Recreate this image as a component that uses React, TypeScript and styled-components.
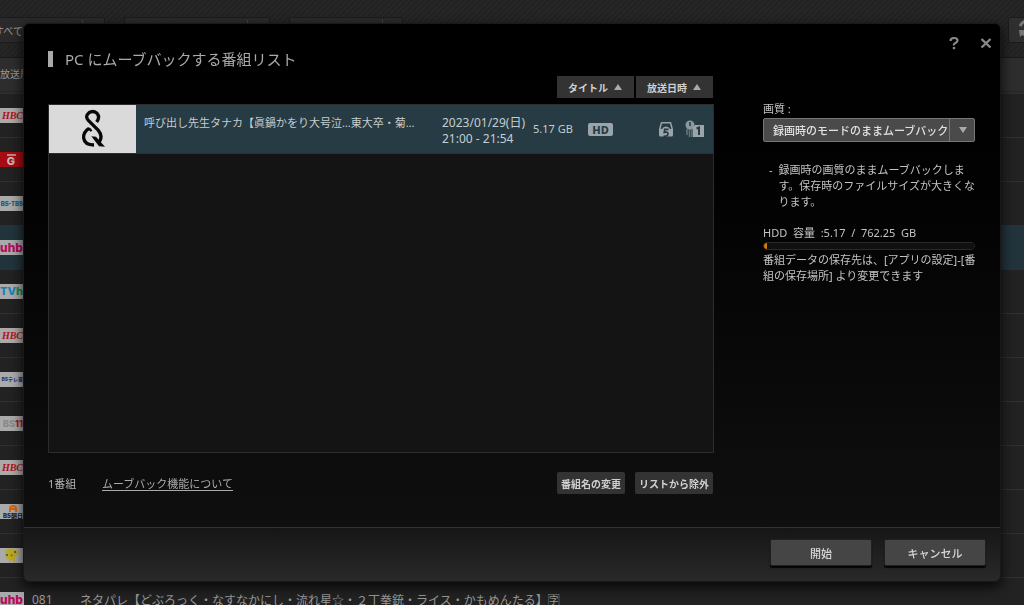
import React from "react";
import styled, { createGlobalStyle } from "styled-components";

const GlobalStyle = createGlobalStyle`
  *, *::before, *::after { box-sizing: border-box; }
  html, body { margin: 0; height: 100%; overflow: hidden; background: #222; }
  body, button, select { font-family: "Noto Sans", "Noto Sans CJK JP", sans-serif; }
  #root { height: 100%; }
  h1, p, ul { margin: 0; padding: 0; font-weight: 400; }
  ul { list-style: none; }
  button { margin: 0; padding: 0; border: 0; background: none; color: inherit; cursor: pointer; }
`;

/* ---------- recorder page behind the dialog ---------- */

const Page = styled.div`
  margin-left: -16px;
  height: 100%;
  overflow: hidden;
  color: #999;
  font-size: 12px;
`;

const Toolbar = styled.div`
  display: flex;
  gap: 19px;
  height: 57px;
  padding-top: 17px;
  background: repeating-linear-gradient(135deg, #262626 0 2px, #222 2px 4px);
`;

const Filter = styled.button<{ $width: number; $split: number }>`
  width: ${(p) => p.$width}px;
  height: 26px;
  padding-left: 9px;
  border: 1px solid #1b1b1b;
  border-radius: 2px;
  background: linear-gradient(#444, #444) ${(p) => p.$split}px 2px / 1px 20px no-repeat, #2a2a2a;
  font-size: 10px;
  text-align: left;
`;

const Refresh = styled.button`
  width: 40px;
  height: 26px;
  margin: 0 -24px 0 auto;
  padding-left: 8px;
  border: 1px solid #1b1b1b;
  border-radius: 2px;
  background: #2f2f2f;
  text-align: left;
`;

const ColumnHead = styled.div`
  height: 36px;
  padding: 0 16px;
  border-top: 1px solid #1a1a1a;
  border-bottom: 3px solid #292929;
  background: #2d2d2d;
  font-size: 10px;
  line-height: 32px;
`;

const Channel = styled.li<{ $active?: boolean }>`
  display: flex;
  align-items: center;
  height: 44px;
  border-top: 1px solid #303030;
  background: ${(p) => (p.$active ? "#22343b" : "#222")};
`;

const Station = styled.span<{ $bg: string; $fg: string; $size: number; $slant?: boolean }>`
  display: flex;
  flex: none;
  align-items: center;
  justify-content: flex-end;
  width: 40px;
  height: 15px;
  padding-right: 1px;
  overflow: hidden;
  background: ${(p) => p.$bg};
  color: ${(p) => p.$fg};
  font-family: ${(p) => (p.$slant ? '"Liberation Serif", serif' : '"Inter", "Noto Sans CJK JP", sans-serif')};
  font-style: ${(p) => (p.$slant ? "italic" : "normal")};
  font-size: ${(p) => p.$size}px;
  font-weight: 800;
  line-height: 15px;
  white-space: nowrap;
`;

const ChannelNumber = styled.span`
  width: 56px;
  padding-left: 8px;
`;

const Program = styled.span`
  white-space: nowrap;
`;

const Tint = styled.span<{ $color: string }>`
  color: ${(p) => p.$color};
`;

const GMark = styled.span`
  display: flex;
  flex-direction: column;
  align-items: center;
  width: 24px;
  font-size: 11px;
  line-height: 9px;

  &::before {
    width: 9px;
    height: 2px;
    margin-bottom: 1px;
    background: #b88;
    content: "";
  }
`;

const AsahiMark = styled.span`
  display: flex;
  flex-direction: column;
  align-items: center;
  font-size: 6px;
  line-height: 7px;
`;

/* ---------- dialog ---------- */

const Overlay = styled.div`
  position: fixed;
  inset: 0;
  display: flex;
  padding: 24px;
`;

const Dialog = styled.section`
  display: flex;
  flex: 1;
  flex-direction: column;
  min-width: 0;
  border-radius: 5px;
  background: linear-gradient(#000 0%, #020202 30%, #0f0f0f 90%);
  box-shadow: 0 0 0 1px #191919, 0 5px 12px 2px rgba(0, 0, 0, 0.7);
  color: #c4c4c4;
  overflow: hidden;
`;

const Header = styled.header`
  display: flex;
  align-items: flex-start;
  gap: 16px;
  height: 52px;
  padding: 11px 6px 0 24px;
`;

const Title = styled.h1`
  display: flex;
  flex: 1;
  align-items: center;
  gap: 12px;
  margin-top: 12px;
  color: #aaa;
  font-size: 15px;
  line-height: 24px;

  &::before {
    width: 5px;
    height: 16px;
    background: #aaa;
    content: "";
  }
`;

const IconButton = styled.button`
  display: grid;
  place-items: center;
  width: 16px;
  height: 16px;
  color: #888;
`;

const Body = styled.div`
  display: grid;
  flex: 1;
  grid-template-columns: minmax(0, 1fr) 212px;
  gap: 49px;
  min-height: 0;
  padding: 0 25px 0 24px;
`;

const Main = styled.div`
  display: flex;
  flex-direction: column;
  min-height: 0;
`;

const SortBar = styled.div`
  display: flex;
  justify-content: flex-end;
  gap: 2px;
  margin: 0 1px 6px 0;
`;

const SortButton = styled.button`
  display: flex;
  align-items: center;
  justify-content: center;
  gap: 5px;
  width: 77px;
  height: 22px;
  background: #333;
  color: #d0d0d0;
  font-size: 10px;
  font-weight: 600;
`;

const List = styled.ul`
  flex: 1;
  min-height: 0;
  border: 1px solid #2c2c2c;
  background: #141414;
  overflow: hidden;
`;

const Item = styled.li`
  display: flex;
  height: 49px;
  border-bottom: 1px solid #2a2f31;
  background: #263b43;
  color: #c6cdd0;
  font-size: 12px;
  line-height: 16px;
`;

const Thumb = styled.div`
  display: grid;
  flex: none;
  place-items: center;
  width: 87px;
  background: #dadada;
`;

const ItemTitle = styled.p`
  flex: 1;
  min-width: 0;
  padding: 10px 0 0 8px;
  font-size: 11px;
  white-space: nowrap;
`;

const ItemDate = styled.p`
  width: 91px;
  padding-top: 10px;
  white-space: nowrap;
`;

const ItemSize = styled.p`
  align-self: center;
  width: 55px;
  font-size: 11px;
  white-space: nowrap;
`;

const ItemMarks = styled.div`
  display: flex;
  align-items: center;
  gap: 11px;
  width: 125px;
  padding-right: 8px;
`;

const Badge = styled.span`
  width: 25px;
  height: 13px;
  margin-right: auto;
  border-radius: 2px;
  background: #9aa4a9;
  color: #263b43;
  font-size: 11px;
  font-weight: 800;
  line-height: 13px;
  text-align: center;
`;

const Actions = styled.div`
  display: flex;
  align-items: center;
  height: 22px;
  margin: 19px 1px 33px 0;
  font-size: 11px;
`;

const Count = styled.span`
  width: 54px;
  color: #b4b4b4;
`;

const HelpLink = styled.a`
  margin-right: auto;
  color: #aaa;
  text-underline-offset: 2px;
`;

const SmallButton = styled.button<{ $width: number }>`
  width: ${(p) => p.$width}px;
  height: 22px;
  margin-left: 10px;
  border-radius: 2px;
  background: #333;
  color: #d0d0d0;
  font-size: 10px;
  font-weight: 600;
`;

const Side = styled.aside`
  padding-top: 25px;
  font-size: 11px;
  line-height: 16px;
  white-space: pre;
`;

const SideLabel = styled.label`
  display: block;
`;

const SelectBox = styled.div`
  position: relative;
  margin: 1px 0 20px;

  svg {
    position: absolute;
    top: 8px;
    right: 7px;
    pointer-events: none;
  }
`;

const Select = styled.select`
  display: block;
  width: 100%;
  height: 24px;
  padding: 0 0 0 9px;
  border: 1px solid #777;
  border-radius: 2px;
  appearance: none;
  background: linear-gradient(#777, #777) right 24px top 0 / 1px 22px no-repeat, #4a4a4a;
  color: #e0e0e0;
  font-size: 11px;
  font-weight: 500;
`;

const Note = styled.div`
  display: flex;
  margin-bottom: 15px;

  &::before {
    width: 16px;
    padding-left: 6px;
    content: "-";
  }
`;

const Capacity = styled.progress`
  display: block;
  width: 100%;
  height: 8px;
  margin: 1px 0 2px;
  border: 1px solid #2a2a2a;
  border-radius: 4px;
  appearance: none;
  background: #101010;
  overflow: hidden;

  &::-webkit-progress-bar { background: #101010; }
  &::-webkit-progress-value { min-width: 3px; background: #d87a10; }
`;

const Footer = styled.footer`
  display: flex;
  flex: none;
  justify-content: flex-end;
  gap: 12px;
  height: 54px;
  padding: 11px 14px 0;
  border-top: 1px solid #333;
  background: linear-gradient(#161616, #292929);
`;

const FooterButton = styled.button`
  width: 102px;
  height: 27px;
  border: 1px solid #202020;
  border-radius: 2px;
  background: #454545;
  box-shadow: 0 2px 1px #050505;
  color: #d8d8d8;
  font-size: 11px;
  font-weight: 500;
`;

type StationInfo = {
  name: string;
  bg: string;
  fg: string;
  size: number;
  slant?: boolean;
  art?: "g" | "asahi" | "chick" | "tvh" | "bs11";
};

const hbc: StationInfo = { name: "HBC", bg: "#aaa", fg: "#b01018", size: 10, slant: true };
const uhb: StationInfo = { name: "uhb", bg: "#aaa", fg: "#b8085c", size: 12 };

const stations: StationInfo[] = [
  hbc,
  { name: "G", bg: "#a80c12", fg: "#bbb", size: 9, art: "g" },
  { name: "BS-TBS", bg: "#aaa", fg: "#1c527e", size: 6 },
  uhb,
  { name: "TVh", bg: "#aaa", fg: "#1582b4", size: 11, art: "tvh" },
  hbc,
  { name: "BSテレ東", bg: "#aaa", fg: "#28357c", size: 5 },
  { name: "BS11", bg: "#aaa", fg: "#888", size: 9, art: "bs11" },
  hbc,
  { name: "BS朝日", bg: "#aaa", fg: "#222", size: 8, art: "asahi" },
  { name: "", bg: "#aaa", fg: "#222", size: 8, art: "chick" },
  uhb,
];

const StationLogo = ({ s }: { s: StationInfo }) => (
  <Station $bg={s.bg} $fg={s.fg} $size={s.size} $slant={s.slant}>
    {s.art === "tvh" && <>TV<Tint $color="#15884c">h</Tint></>}
    {s.art === "bs11" && <>BS<Tint $color="#a01820">11</Tint></>}
    {s.art === "g" && <GMark>G</GMark>}
    {s.art === "asahi" && (
      <AsahiMark>
        <svg width="8" height="7" viewBox="0 0 8 7" aria-hidden="true">
          <path d="M1 7V4Q1 1 4 1Q7 1 7 4V7M2 4H6" fill="none" stroke="#d06410" strokeWidth="2" />
        </svg>
        BS朝日
      </AsahiMark>
    )}
    {s.art === "chick" && (
      <svg width="20" height="15" viewBox="0 0 20 15" role="img" aria-label="チャンネルマーク">
        <path d="M2 7Q1 3 5 1Q10-1 14 3L16 5 13 8Q12 10 9 10H6Q2 10 2 7Z" fill="#b9ac22" />
        <path d="M5 9L3 12 6 11V14H8V12H10V14H12V10Z" fill="#b9ac22" />
        <path d="M3 7h2M11 4h2" stroke="#444" strokeWidth="1.5" />
        <path d="M7 7l3-1-1 3z" fill="#a86628" />
      </svg>
    )}
    {!s.art && s.name}
  </Station>
);

const Triangle = ({ down }: { down?: boolean }) => (
  <svg width="10" height="8" viewBox="0 0 10 8" aria-hidden="true">
    <path d={down ? "M1 1H9L5 7Z" : "M1 7H9L5 1Z"} fill="#aaa" />
  </svg>
);

const ArtistLogo = () => (
  <svg width="26" height="40" viewBox="0 0 78 120" role="img" aria-label="番組サムネイル">
    <g fill="none" stroke="#080808" strokeWidth="10">
      <path d="M50 39Q61 24 51 13Q39 3 27 11Q14 22 25 34L55 64Q70 82 57 100" />
      <path d="M27 58Q9 69 11 88Q14 108 42 108" />
      <path d="M25 60Q29 57 34 67" strokeWidth="7" />
    </g>
    <path d="M34 82L48 83 75 113 57 112Z" fill="#080808" />
  </svg>
);

const DriveIcon = () => (
  <svg width="16" height="17" viewBox="0 0 16 17" role="img" aria-label="ドライブ 5">
    <path d="M3.500 1.700H12.500Q13.500 5 14.300 8.500M3.500 1.700Q2.500 5 1.700 8.500" fill="none" stroke="#9aa4a9" strokeWidth="1.500" strokeLinecap="round" />
    <path d="M1 8H4Q5 5.500 8 5.500T12 8H15V14Q15 15.500 13.500 15.500H2.500Q1 15.500 1 14Z" fill="#9aa4a9" />
    <path d="M10.500 8.300H6.700L6.300 11.300Q10 10.500 10 13T5.500 15.300" fill="none" stroke="#263b43" strokeWidth="1.700" />
  </svg>
);

const CopyIcon = () => (
  <svg width="20" height="18" viewBox="0 0 20 18" role="img" aria-label="コピー残り 1">
    <path d="M2 9V15M4.500 9V17M7 9V17" stroke="#68777d" strokeWidth="1.500" />
    <circle cx="5" cy="5" r="4.500" fill="#8d989d" />
    <path d="M5 2V6" stroke="#263b43" strokeWidth="1.500" />
    <path d="M8 7L10 5H19V17H8Z" fill="#9aa4a9" />
    <path d="M11.500 8.500L14 7.500V15" fill="none" stroke="#263b43" strokeWidth="2" />
  </svg>
);

export default function App() {
  return (
    <>
      <GlobalStyle />
      <Page aria-hidden="true">
        <Toolbar>
          <Filter $width={121} $split={97}>すべて</Filter>
          <Filter $width={146} $split={122} />
          <Filter $width={114} $split={92} />
          <Refresh>
            <svg width="22" height="18" viewBox="0 0 22 18">
              <path d="M3 7Q6 1 12 2Q17 3 19 7" fill="none" stroke="#777" strokeWidth="3" />
              <path d="M2 11H9L7 13Q11 16 15 12L18 14Q12 20 5 16L3 18Z" fill="#777" />
            </svg>
          </Refresh>
        </Toolbar>
        <ColumnHead>放送局</ColumnHead>
        <ul>
          {stations.map((s, i) => (
            <Channel key={i} $active={i === 3}>
              <StationLogo s={s} />
              {i === stations.length - 1 && (
                <>
                  <ChannelNumber>081</ChannelNumber>
                  <Program>ネタパレ【どぶろっく・なすなかにし・流れ星☆・２丁拳銃・ライス・かもめんたる】🈑</Program>
                </>
              )}
            </Channel>
          ))}
        </ul>
      </Page>

      <Overlay>
        <Dialog role="dialog" aria-labelledby="dialog-title">
          <Header>
            <Title id="dialog-title">PC にムーブバックする番組リスト</Title>
            <IconButton aria-label="ヘルプ">
              <svg width="12" height="14" viewBox="0 0 12 14">
                <path d="M2.500 5Q2.500 2 6 2T9.500 4.500Q9.500 6 7.500 7T6 9.500" fill="none" stroke="currentColor" strokeWidth="2.200" />
                <rect x="4.800" y="11" width="2.400" height="2.200" fill="currentColor" />
              </svg>
            </IconButton>
            <IconButton aria-label="閉じる">
              <svg width="12" height="12" viewBox="0 0 12 12">
                <path d="M1.500 2L10.500 10.500M10.500 2L1.500 10.500" stroke="currentColor" strokeWidth="2.400" />
              </svg>
            </IconButton>
          </Header>
          <Body>
            <Main>
              <SortBar>
                <SortButton>タイトル<Triangle /></SortButton>
                <SortButton>放送日時<Triangle /></SortButton>
              </SortBar>
              <List>
                <Item>
                  <Thumb><ArtistLogo /></Thumb>
                  <ItemTitle>呼び出し先生タナカ【眞鍋かをり大号泣…東大卒・菊…</ItemTitle>
                  <ItemDate>2023/01/29(日)<br />21:00 - 21:54</ItemDate>
                  <ItemSize>5.17 GB</ItemSize>
                  <ItemMarks>
                    <Badge>HD</Badge>
                    <DriveIcon />
                    <CopyIcon />
                  </ItemMarks>
                </Item>
              </List>
              <Actions>
                <Count>1番組</Count>
                <HelpLink href="#about">ムーブバック機能について</HelpLink>
                <SmallButton $width={68}>番組名の変更</SmallButton>
                <SmallButton $width={78}>リストから除外</SmallButton>
              </Actions>
            </Main>
            <Side>
              <SideLabel htmlFor="quality">画質 :</SideLabel>
              <SelectBox>
                <Select id="quality">
                  <option>録画時のモードのままムーブバック</option>
                </Select>
                <Triangle down />
              </SelectBox>
              <Note>
                <p>録画時の画質のままムーブバックしま<br />す。保存時のファイルサイズが大きくな<br />ります。</p>
              </Note>
              <SideLabel htmlFor="hdd">{"HDD  容量  :5.17  /  762.25  GB"}</SideLabel>
              <Capacity id="hdd" value={5.17} max={762.25} />
              <p>番組データの保存先は、[アプリの設定]-[番<br />組の保存場所] より変更できます</p>
            </Side>
          </Body>
          <Footer>
            <FooterButton>開始</FooterButton>
            <FooterButton>キャンセル</FooterButton>
          </Footer>
        </Dialog>
      </Overlay>
    </>
  );
}
